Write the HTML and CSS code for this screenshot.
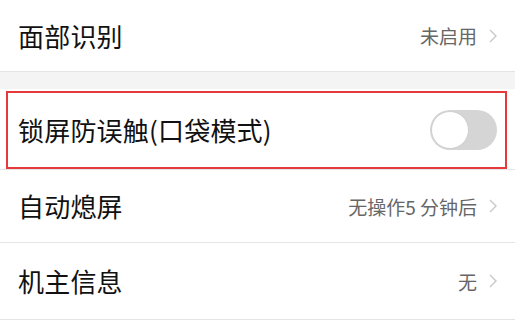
FILE: index.html
```html
<!DOCTYPE html>
<html lang="zh">
<head>
<meta charset="utf-8">
<link rel="stylesheet" href="styles.css">
</head>
<body>
<div class="list">
  <div class="row row-first">
    <span class="label">面部识别</span>
    <span class="value">未启用<svg class="chev" viewBox="0 0 8 14" width="8" height="14"><polyline points="1,1 7,7 1,13" /></svg></span>
  </div>
  <div class="band"></div>
  <div class="hl-wrap">
    <div class="row row-hl">
      <span class="label">锁屏防误触(口袋模式)</span>
      <span class="switch"><span class="knob"></span></span>
    </div>
  </div>
  <div class="row row-3">
    <span class="label">自动熄屏</span>
    <span class="value">无操作5 分钟后<svg class="chev" viewBox="0 0 8 14" width="8" height="14"><polyline points="1,1 7,7 1,13" /></svg></span>
  </div>
  <div class="row row-4">
    <span class="label">机主信息</span>
    <span class="value">无<svg class="chev" viewBox="0 0 8 14" width="8" height="14"><polyline points="1,1 7,7 1,13" /></svg></span>
  </div>
</div>
</body>
</html>
```
FILE: styles.css
```css
html, body {
  margin: 0;
  padding: 0;
  background: #ffffff;
}
body {
  width: 525px;
  height: 336px;
  overflow: hidden;
  font-family: "Noto Sans CJK SC", "Noto Sans", sans-serif;
}
.list {
  width: 515px;
}
.row {
  display: flex;
  align-items: center;
  justify-content: space-between;
  padding: 0 18px 0 18px;
  border-bottom: 1px solid #e4e4e4;
  box-sizing: border-box;
}
.row-first { height: 72px; }
.row-3 { height: 73px; }
.row-4 { height: 77px; }
.label {
  font-size: 26px;
  color: #111111;
  line-height: 1;
  letter-spacing: 0.2px;
}
.value {
  display: flex;
  align-items: center;
  font-size: 19px;
  color: #666666;
  line-height: 1;
}
.chev {
  display: block;
  margin-left: 12px;
  fill: none;
  stroke: #c8c8c8;
  stroke-width: 1.4;
}
.band {
  height: 17px;
  background: #f4f4f4;
}
.hl-wrap {
  padding: 2px 8px 0 6px;
  border-bottom: 1px solid #e4e4e4;
  height: 81px;
  box-sizing: border-box;
}
.row-hl {
  height: 78px;
  border: 2px solid #e5393b;
  padding: 0 8px 0 10px;
}
.switch {
  width: 67px;
  height: 40px;
  border-radius: 20px;
  background: #d5d5d5;
  display: flex;
  align-items: center;
  padding-left: 1px;
  box-sizing: border-box;
}
.knob {
  width: 38px;
  height: 38px;
  border-radius: 50%;
  background: #ffffff;
  border: 1px solid #cfcfcf;
  box-sizing: border-box;
}
```
